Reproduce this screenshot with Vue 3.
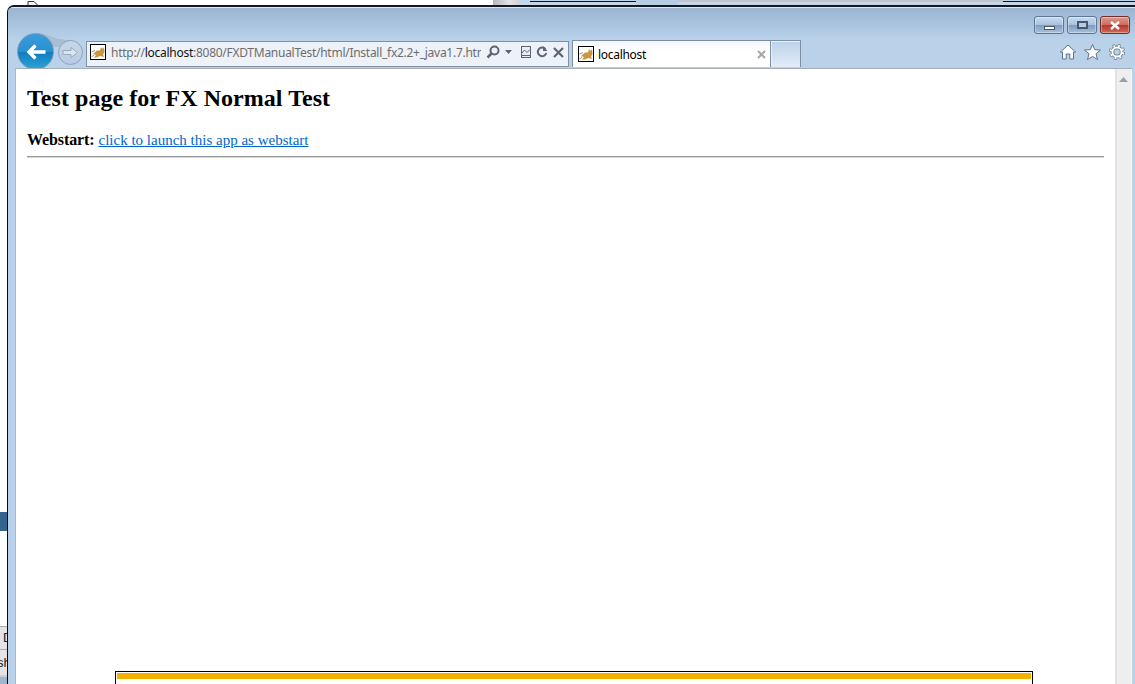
<script setup>
const topSegments = [
  { w: 493, c: 'seg-white' },
  { w: 27, c: 'seg-scroll' },
  { w: 10, c: 'seg-light' },
  { w: 106, c: 'seg-dark' },
  { w: 42, c: 'seg-blue' },
  { w: 325, c: 'seg-grey' },
  { w: 132, c: 'seg-dark' }
]
</script>

<template>
  <div class="desk">
    <div class="top-strip">
      <div v-for="(s, i) in topSegments" :key="i" :class="['seg', s.c]" :style="{ width: s.w + 'px' }"></div>
    </div>
    <div class="behind-doc">
      <svg class="doc" width="12" height="5" viewBox="0 0 12 5"><path d="M1 5V0.500H7L10.500 4V5" fill="#f4f4f4" stroke="#333" stroke-width="1"/></svg>
      <span class="behind-text">Deployed at the root of the server</span>
    </div>
    <div class="behind-blue"></div>
    <div class="behind-rows">
      <div class="behind-row">D</div>
      <div class="behind-row">sh</div>
      <div class="behind-bar"></div>
    </div>

    <section class="window">
      <header class="titlebar">
        <div class="win-btn">
          <span class="glyph-min"></span>
        </div>
        <div class="win-btn">
          <span class="glyph-max"></span>
        </div>
        <div class="win-btn close">
          <svg width="12" height="9" viewBox="0 0 12 9"><path d="M2 1L10 8M10 1L2 8" stroke="#fff" stroke-width="2.400"/></svg>
        </div>
      </header>

      <div class="toolbar">
        <svg class="wing" width="40" height="14" viewBox="0 0 40 14"><path d="M0 0C14 0 18 7 36 7L36 14L0 14Z" fill="#a9bdd5"/></svg>
        <div class="back">
          <svg width="20" height="16" viewBox="0 0 20 16"><path d="M9.500 1.500L3 8L9.500 14.500M3 8H19.500" fill="none" stroke="#fff" stroke-width="3.400"/></svg>
        </div>
        <div class="forward">
          <svg width="17" height="13" viewBox="0 0 17 13"><path d="M1 4.500H9V1.500L15.500 6.500L9 11.500V8.500H1Z" fill="#dbe5f0" stroke="#9aa9bb" stroke-width="1"/></svg>
        </div>
        <div class="address">
          <svg class="fav" width="16" height="16" viewBox="0 0 16 16">
            <rect x="0.500" y="0.500" width="15" height="15" fill="#fff" stroke="#000"/>
            <path d="M3 10L7 6.500H10L11 3L12 4.500H13L14 3L14.500 8L13 10.500L14 13L10 12L7 13.500L4 13.500L6 11Z" fill="#c8973e"/>
            <path d="M1.500 8L5 6.500M1.500 13L4 11" stroke="#999" stroke-width="1"/>
          </svg>
          <span class="url"><span class="dim">http://</span><span class="host">localhost</span><span class="dim">:8080/FXDTManualTest/html/Install_fx2.2+_java1.7.htm</span></span>
          <svg class="search" width="14" height="14" viewBox="0 0 14 14"><circle cx="8.500" cy="5.500" r="4" fill="none" stroke="#5c6673" stroke-width="2"/><path d="M5.500 8.500L1.500 12.500" stroke="#5c6673" stroke-width="2.500"/></svg>
          <svg class="caret" width="7" height="4" viewBox="0 0 7 4"><path d="M0 0H7L3.500 4Z" fill="#5c6673"/></svg>
          <svg class="compat" width="10" height="12" viewBox="0 0 10 12"><rect x="0.500" y="0.500" width="9" height="11" fill="#e8edf3" stroke="#5c6673"/><path d="M1 7L3.500 4L6 6.500L9 3.500M1 9.500H9" fill="none" stroke="#5c6673"/></svg>
          <svg class="reload" width="12" height="12" viewBox="0 0 12 12"><path d="M9.500 3.200A4.300 4.300 0 1 0 10.300 7" fill="none" stroke="#5c6673" stroke-width="2"/><path d="M7 0V5H11.500Z" fill="#5c6673"/></svg>
          <svg class="stop" width="11" height="11" viewBox="0 0 11 11"><path d="M1 1L10 10M10 1L1 10" stroke="#5c6673" stroke-width="2.200"/></svg>
        </div>
        <div class="tab">
          <svg class="fav" width="16" height="16" viewBox="0 0 16 16">
            <rect x="0.500" y="0.500" width="15" height="15" fill="#fff" stroke="#000"/>
            <path d="M3 10L7 6.500H10L11 3L12 4.500H13L14 3L14.500 8L13 10.500L14 13L10 12L7 13.500L4 13.500L6 11Z" fill="#c8973e"/>
            <path d="M1.500 8L5 6.500M1.500 13L4 11" stroke="#999" stroke-width="1"/>
          </svg>
          <span class="tab-title">localhost</span>
          <svg class="tab-close" width="9" height="9" viewBox="0 0 9 9"><path d="M1 1L8 8M8 1L1 8" stroke="#a8a8a8" stroke-width="2"/></svg>
        </div>
        <div class="new-tab"></div>
        <div class="tools">
          <svg width="16" height="16" viewBox="0 0 16 16"><path d="M8 1L15.500 8H13.500V15H9.800V10H6.200V15H2.500V8H0.500Z" fill="#fff" stroke="#5f7286"/></svg>
          <svg width="17" height="16" viewBox="0 0 17 16"><path d="M8.500 0.500L10.700 5.700L16.500 6.100L12 9.800L13.500 15.500L8.500 12.400L3.500 15.500L5 9.800L0.500 6.100L6.300 5.700Z" fill="#fff" stroke="#5f7286"/></svg>
          <svg width="16" height="16" viewBox="0 0 16 16"><circle cx="8" cy="8" r="6.300" fill="none" stroke="#5f7286" stroke-width="3.400" stroke-dasharray="2.500 2.450"/><circle cx="8" cy="8" r="4.600" fill="none" stroke="#5f7286" stroke-width="3.600"/><circle cx="8" cy="8" r="6.200" fill="none" stroke="#fff" stroke-width="2.200" stroke-dasharray="1.800 3.070" stroke-dashoffset="-0.350"/><circle cx="8" cy="8" r="4.600" fill="none" stroke="#fff" stroke-width="2"/></svg>
        </div>
      </div>

      <div class="body">
        <main class="page">
          <h1>Test page for FX Normal Test</h1>
          <p><b>Webstart:</b> <a href="#">click to launch this app as webstart</a></p>
          <hr />
          <div class="applet"><div class="applet-bar"></div></div>
        </main>
        <aside class="scrollbar">
          <svg width="9" height="5" viewBox="0 0 9 5"><path d="M0 5L4.500 0L9 5Z" fill="#9a9fa6"/></svg>
        </aside>
      </div>
    </section>
  </div>
</template>

<style>
html, body { margin: 0; padding: 0; background: #fff; overflow: hidden; }
</style>

<style scoped>
.desk {
  position: relative;
  width: 1135px;
  height: 684px;
  overflow: hidden;
  background: #fff;
}
.top-strip { display: flex; height: 5px; }
.seg { height: 5px; box-sizing: border-box; }
.seg-white { background: #fff; }
.seg-scroll { background: linear-gradient(90deg, #b8b8bc, #e4e4e8 60%, #cfd0d6); }
.seg-light { background: #c3d6ea; }
.seg-dark { background: linear-gradient(180deg, #c3d6ea 0 1px, #111 1px 2px, #c3d6ea 2px); }
.seg-blue { background: #b7cde4; }
.seg-grey { background: linear-gradient(180deg, #c2c4d0 0 2px, #c3d6ea 2px); }

.behind-doc {
  position: absolute;
  left: 27px;
  top: 0;
  height: 6px;
  display: flex;
  gap: 9px;
  overflow: hidden;
}
.doc { margin-top: 1px; flex: none; }
.behind-text {
  font: 13px/1 "Liberation Sans", sans-serif;
  color: #222;
  margin-top: 3px;
  white-space: nowrap;
  letter-spacing: 0.3px;
}
.behind-blue {
  position: absolute;
  left: 0;
  top: 512px;
  width: 7px;
  height: 19px;
  background: #34658c;
}
.behind-rows {
  position: absolute;
  left: 0;
  top: 626px;
  width: 7px;
  height: 58px;
  display: flex;
  flex-direction: column;
  overflow: hidden;
}
.behind-row {
  height: 23px;
  flex: none;
  box-sizing: border-box;
  background: #e4e4e6;
  border-top: 1px solid #aaa;
  font: 13px/21px "Liberation Sans", sans-serif;
  color: #222;
  white-space: nowrap;
  text-indent: 3px;
}
.behind-row + .behind-row {
  height: 28px;
  line-height: 25px;
  text-indent: -3px;
  border-bottom: 2px solid #d0d0d4;
}
.behind-bar { flex: 1; background: #9fb6cc; }

.window {
  position: absolute;
  left: 7px;
  top: 5px;
  width: 1128px;
  height: 679px;
  box-sizing: border-box;
  border-top: 2px solid #14181f;
  border-left: 1px solid #0a0a0a;
  border-top-left-radius: 7px;
  background: #b9d1ea;
  overflow: hidden;
  display: flex;
  flex-direction: column;
}
.titlebar {
  height: 33px;
  flex: none;
  box-sizing: border-box;
  padding: 9px 5px 0 0;
  display: flex;
  justify-content: flex-end;
  align-items: flex-start;
  gap: 3px;
  background: linear-gradient(180deg, #dfe8f2 0, #dfe8f2 1px, #9ab4d2 1px, #b9d2ea 33px);
}
.win-btn {
  width: 30px;
  height: 18px;
  box-sizing: border-box;
  border: 1px solid #5c7795;
  border-radius: 3px;
  background: linear-gradient(180deg, #c9dcef 0, #a9c3df 48%, #7f9cbf 52%, #a8c1dc 100%);
  box-shadow: inset 0 0 0 1px rgba(255,255,255,0.35);
  display: flex;
  align-items: center;
  justify-content: center;
}
.win-btn.close {
  border-color: #6d2f2b;
  background: linear-gradient(180deg, #dc9a8e 0, #cc6d5f 48%, #b8362a 52%, #cf6b58 100%);
}
.glyph-min {
  width: 11px;
  height: 4px;
  margin-top: 5px;
  box-sizing: border-box;
  background: #fff;
  border: 1px solid #46586e;
}
.glyph-max {
  width: 11px;
  height: 8px;
  box-sizing: border-box;
  border: 2px solid #46586e;
  background: #b8cde3;
}
.toolbar {
  height: 28px;
  flex: none;
  display: flex;
  align-items: center;
  background: #b9d2ea;
  padding-left: 9px;
  position: relative;
}
.wing {
  position: absolute;
  left: 27px;
  top: -7px;
}
.back {
  width: 37px;
  height: 37px;
  flex: none;
  box-sizing: border-box;
  margin-bottom: 5px;
  border-radius: 50%;
  border: 1px solid #7d9dbb;
  background: linear-gradient(180deg, #3a9ddb 0, #2a8fd0 50%, #0f7cbf 52%, #2ca4d6 100%);
  display: flex;
  align-items: center;
  justify-content: center;
  position: relative;
}
.forward {
  width: 25px;
  height: 25px;
  flex: none;
  box-sizing: border-box;
  margin: 0 3px 4px 4px;
  border-radius: 50%;
  border: 1px solid #8fa3bb;
  background: linear-gradient(180deg, #c7d8ea, #b6cbe2);
  display: flex;
  align-items: center;
  justify-content: center;
  position: relative;
}
.address {
  width: 483px;
  height: 26px;
  flex: none;
  box-sizing: border-box;
  margin-top: 1px;
  margin-bottom: 1px;
  border: 1px solid #7f90a5;
  background: #edf2f9;
  display: flex;
  align-items: center;
  padding: 2px 0 6px 3px;
}
.fav { flex: none; }
.url {
  width: 370px;
  margin-left: 5px;
  margin-top: 1px;
  flex: none;
  overflow: hidden;
  white-space: nowrap;
  font: 12px/16px "Noto Sans", sans-serif;
  letter-spacing: -0.27px;
}
.dim { color: #6d6d6d; }
.host { color: #111; }
.search { margin-left: 5px; flex: none; }
.caret { margin-left: 5px; flex: none; }
.compat { margin-left: 9px; flex: none; }
.reload { margin-left: 5px; flex: none; }
.stop { margin-left: 5px; flex: none; }
.tab {
  width: 199px;
  height: 27px;
  flex: none;
  box-sizing: border-box;
  margin-left: 3px;
  margin-bottom: 1px;
  border: 1px solid #7f90a5;
  border-bottom: 0;
  background: linear-gradient(180deg, #f4f7fb, #fff 40%);
  display: flex;
  align-items: center;
  padding-left: 5px;
}
.tab-title {
  margin-left: 4px;
  margin-top: 1px;
  font: 12px/16px "Noto Sans", sans-serif;
  letter-spacing: -0.3px;
  color: #000;
}
.tab-close { margin-left: auto; margin-right: 4px; }
.new-tab {
  width: 30px;
  height: 27px;
  flex: none;
  box-sizing: border-box;
  margin-bottom: 1px;
  border: 1px solid #7f90a5;
  border-left: 0;
  border-bottom: 0;
  box-shadow: inset 1px 1px 0 #e6eef7;
  background: linear-gradient(180deg, #bcd2ea, #e2ecf7);
}
.tools {
  margin-left: auto;
  margin-right: 10px;
  margin-bottom: 4px;
  display: flex;
  gap: 8px;
  align-items: center;
}
.body {
  flex: 1;
  min-height: 0;
  display: flex;
  margin-left: 7px;
  margin-right: 3px;
  border-left: 1px solid #b5b7b9;
  border-top: 1px solid #a8aeb5;
  background: #fff;
  position: relative;
  z-index: 2;
}
.page {
  flex: 1;
  min-width: 0;
  padding: 0 11px 0 11px;
  font-family: "Liberation Serif", serif;
  font-size: 16px;
  color: #000;
  overflow: hidden;
}
h1 {
  margin: 16px 0 0;
  font-size: 24px;
  line-height: 27px;
  font-weight: bold;
  letter-spacing: 0.04px;
}
p {
  margin: 19px 0 0;
  line-height: 18px;
}
b { letter-spacing: -0.1px; }
a {
  color: #0066cc;
  text-decoration: underline;
  font-size: 15px;
}
hr {
  margin: 7px 0 0;
  height: 1px;
  border: 0;
  background: #9a9a9a;
  box-shadow: 0 1px 0 #d5d5d5;
}
.applet {
  margin: 514px 0 0 88px;
  width: 918px;
  height: 60px;
  box-sizing: border-box;
  border: 1px solid #000;
  padding: 1px;
}
.applet-bar { height: 6px; background: #f5b000; }
.scrollbar {
  width: 17px;
  flex: none;
  box-sizing: border-box;
  background: #eeeeee;
  border-left: 2px solid #e2e2e2;
  border-right: 1px solid #fafafa;
  display: flex;
  justify-content: center;
  padding: 8px 2px 0 0;
  align-items: flex-start;
}
</style>
